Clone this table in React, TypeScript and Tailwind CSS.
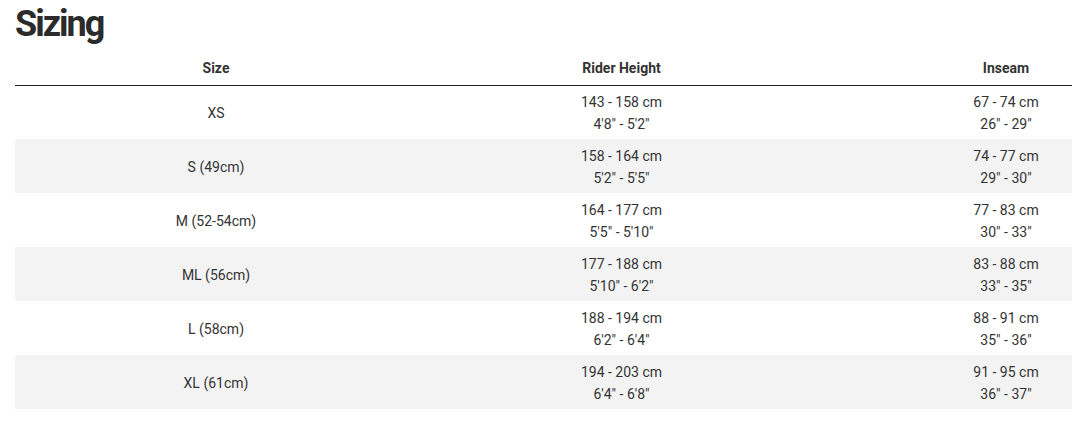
import React from "react";

const rows = [
  ["XS", "143 - 158 cm", "4'8\" - 5'2\"", "67 - 74 cm", "26\" - 29\""],
  ["S (49cm)", "158 - 164 cm", "5'2\" - 5'5\"", "74 - 77 cm", "29\" - 30\""],
  ["M (52-54cm)", "164 - 177 cm", "5'5\" - 5'10\"", "77 - 83 cm", "30\" - 33\""],
  ["ML (56cm)", "177 - 188 cm", "5'10\" - 6'2\"", "83 - 88 cm", "33\" - 35\""],
  ["L (58cm)", "188 - 194 cm", "6'2\" - 6'4\"", "88 - 91 cm", "35\" - 36\""],
  ["XL (61cm)", "194 - 203 cm", "6'4\" - 6'8\"", "91 - 95 cm", "36\" - 37\""],
];

export default function App() {
  return (
    <div className="w-[1072px] h-[433px] overflow-hidden bg-white text-[#333]" style={{ fontFamily: "Roboto, 'Liberation Sans', sans-serif" }}>
      <div className="pl-[15px]">
        <h1 className="text-[36px] leading-[46px] font-bold tracking-[-2px] text-[#2b2b2b] pt-[1px]" style={{ fontFamily: "Roboto, 'Liberation Sans', sans-serif" }}>
          Sizing
        </h1>
        <table className="w-[1171px] border-collapse table-fixed mt-[2px]">
          <colgroup>
            <col className="w-[402px]" />
            <col className="w-[409px]" />
            <col className="w-[360px]" />
          </colgroup>
          <thead>
            <tr className="h-[36px] border-b border-[#222]">
              <th className="text-[14px] font-bold text-center align-middle text-[#333] pt-[4px]">Size</th>
              <th className="text-[14px] font-bold text-center align-middle text-[#333] pt-[4px]">Rider Height</th>
              <th className="text-[14px] font-bold text-center align-middle text-[#333] pt-[4px]">Inseam</th>
            </tr>
          </thead>
          <tbody>
            {rows.map((r, i) => (
              <tr key={i} className={`h-[54px] ${i % 2 === 1 ? "bg-[#f3f3f3]" : "bg-white"}`}>
                <td className="text-[14px] text-center align-middle leading-[22px] pt-[2px]">{r[0]}</td>
                <td className="text-[14px] text-center align-middle leading-[22px] pt-[2px]">
                  <div>{r[1]}</div>
                  <div>{r[2]}</div>
                </td>
                <td className="text-[14px] text-center align-middle leading-[22px] pt-[2px]">
                  <div>{r[3]}</div>
                  <div>{r[4]}</div>
                </td>
              </tr>
            ))}
          </tbody>
        </table>
      </div>
    </div>
  );
}
